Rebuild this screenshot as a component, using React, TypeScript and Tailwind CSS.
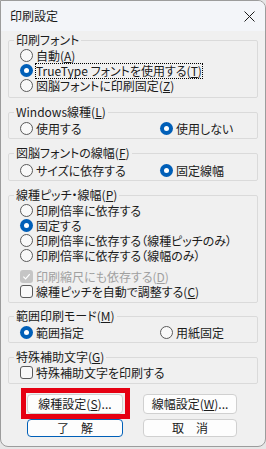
import React from 'react';

const font = "font-['Noto_Sans_CJK_JP','Noto_Sans',sans-serif] [font-feature-settings:'palt'] text-[12px] leading-[16px] text-[#1b1b1b]";

const Radio: React.FC<{ checked?: boolean; focus?: boolean; children: React.ReactNode }> = ({ checked, focus, children }) => (
  <div className="flex items-center h-[15px] leading-[14px]">
    {checked ? (
      <span className="w-[13px] h-[13px] rounded-full bg-[#005fb8] flex items-center justify-center shrink-0">
        <span className="w-[5px] h-[5px] rounded-full bg-white" />
      </span>
    ) : (
      <span className="w-[13px] h-[13px] rounded-full border border-[#5a5a5a] bg-[#f9f9f9] shrink-0" />
    )}
    <span className={`ml-[3px] whitespace-nowrap ${focus ? 'outline-1 outline-dotted outline-black' : ''}`}>{children}</span>
  </div>
);

const Check: React.FC<{ checked?: boolean; disabled?: boolean; children: React.ReactNode }> = ({ checked, disabled, children }) => (
  <div className="flex items-center h-[15px] leading-[14px]">
    {checked ? (
      <span className="w-[13px] h-[13px] rounded-[3px] bg-[#c5c5c5] flex items-center justify-center shrink-0">
        <svg width="9" height="9" viewBox="0 0 10 10" fill="none">
          <path d="M1.5 5.2 L4 7.6 L8.6 2.4" stroke="white" strokeWidth="1.3" />
        </svg>
      </span>
    ) : (
      <span className="w-[13px] h-[13px] rounded-[3px] border border-[#5a5a5a] bg-[#f9f9f9] shrink-0" />
    )}
    <span className={`ml-[3px] whitespace-nowrap ${disabled ? 'text-[#a0a0a0]' : ''}`}>{children}</span>
  </div>
);

const Group: React.FC<{ title: React.ReactNode; className?: string; children: React.ReactNode }> = ({ title, className, children }) => (
  <fieldset className={`border border-[#dadada] rounded-[2px] px-[11px] ${className ?? ''}`}>
    <legend className="ml-[-6px] px-[2px]">{title}</legend>
    {children}
  </fieldset>
);

export default function App() {
  return (
    <div className={`w-[266px] h-[449px] bg-[#e6e6e6] ${font}`}>
      <div className="w-[266px] h-[447px] border border-[#9c9c9c] rounded-b-[8px] rounded-tr-[8px] bg-[#f0f0f0] flex flex-col overflow-hidden">
        <div className="h-[30px] bg-[#f3f5f9] flex items-center justify-between pl-[9px] pr-[10px] shrink-0">
          <span>印刷設定</span>
          <svg width="11" height="11" viewBox="0 0 11 11">
            <path d="M0.5 0.5 L10.5 10.5 M10.5 0.5 L0.5 10.5" stroke="#1b1b1b" strokeWidth="1" />
          </svg>
        </div>

        <div className="px-[7px] pt-[1px] flex flex-col">
          <Group title="印刷フォント" className="pb-[4px]">
            <Radio>自動(<u>A</u>)</Radio>
            <Radio checked focus>TrueType フォントを使用する(<u>T</u>)</Radio>
            <Radio>図脳フォントに印刷固定(<u>Z</u>)</Radio>
          </Group>

          <Group title={<>Windows線種(<u>L</u>)</>} className="mt-[6px] pt-[1px] pb-[2px]">
            <div className="grid grid-cols-[140px_1fr]">
              <Radio>使用する</Radio>
              <Radio checked>使用しない</Radio>
            </div>
          </Group>

          <Group title={<>図脳フォントの線幅(<u>F</u>)</>} className="mt-[6px] pt-[2px] pb-[2px]">
            <div className="grid grid-cols-[140px_1fr]">
              <Radio>サイズに依存する</Radio>
              <Radio checked>固定線幅</Radio>
            </div>
          </Group>

          <Group title={<>線種ピッチ・線幅(<u>P</u>)</>} className="mt-[6px] pb-[3px]">
            <Radio>印刷倍率に依存する</Radio>
            <Radio checked>固定する</Radio>
            <Radio>印刷倍率に依存する（線種ピッチのみ）</Radio>
            <Radio>印刷倍率に依存する（線幅のみ）</Radio>
            <div className="mt-[6px]">
              <Check checked disabled>印刷縮尺にも依存する(<u>D</u>)</Check>
              <Check>線種ピッチを自動で調整する(<u>C</u>)</Check>
            </div>
          </Group>

          <Group title={<>範囲印刷モード(<u>M</u>)</>} className="mt-[5px] pt-[1px] pb-[2px]">
            <div className="grid grid-cols-[140px_1fr]">
              <Radio checked>範囲指定</Radio>
              <Radio>用紙固定</Radio>
            </div>
          </Group>

          <Group title={<>特殊補助文字(<u>G</u>)</>} className="mt-[6px] pb-[3px]">
            <Check>特殊補助文字を印刷する</Check>
          </Group>

          <div className="mt-[10px] pl-[19px] flex flex-col gap-[5px]">
            <div className="flex gap-[20px]">
              <div className="relative">
                <button className="w-[96px] h-[20px] rounded-[4px] border border-[#d0d0d0] bg-[#fdfdfd] flex items-center justify-center">
                  線種設定(<u>S</u>)...
                </button>
                <div className="absolute -left-[6px] -right-[7px] -top-[6px] -bottom-[5px] border-[5px] border-[#e60012]" />
              </div>
              <button className="w-[94px] h-[20px] rounded-[4px] border border-[#d0d0d0] bg-[#fdfdfd] flex items-center justify-center">
                線幅設定(<u>W</u>)...
              </button>
            </div>
            <div className="flex gap-[20px]">
              <button className="w-[96px] h-[18px] rounded-[4px] border border-[#005fb8] bg-[#fdfdfd] flex items-center justify-center">
                了　解
              </button>
              <button className="w-[94px] h-[18px] rounded-[4px] border border-[#d0d0d0] bg-[#fdfdfd] flex items-center justify-center">
                取　消
              </button>
            </div>
          </div>
        </div>
      </div>
    </div>
  );
}
